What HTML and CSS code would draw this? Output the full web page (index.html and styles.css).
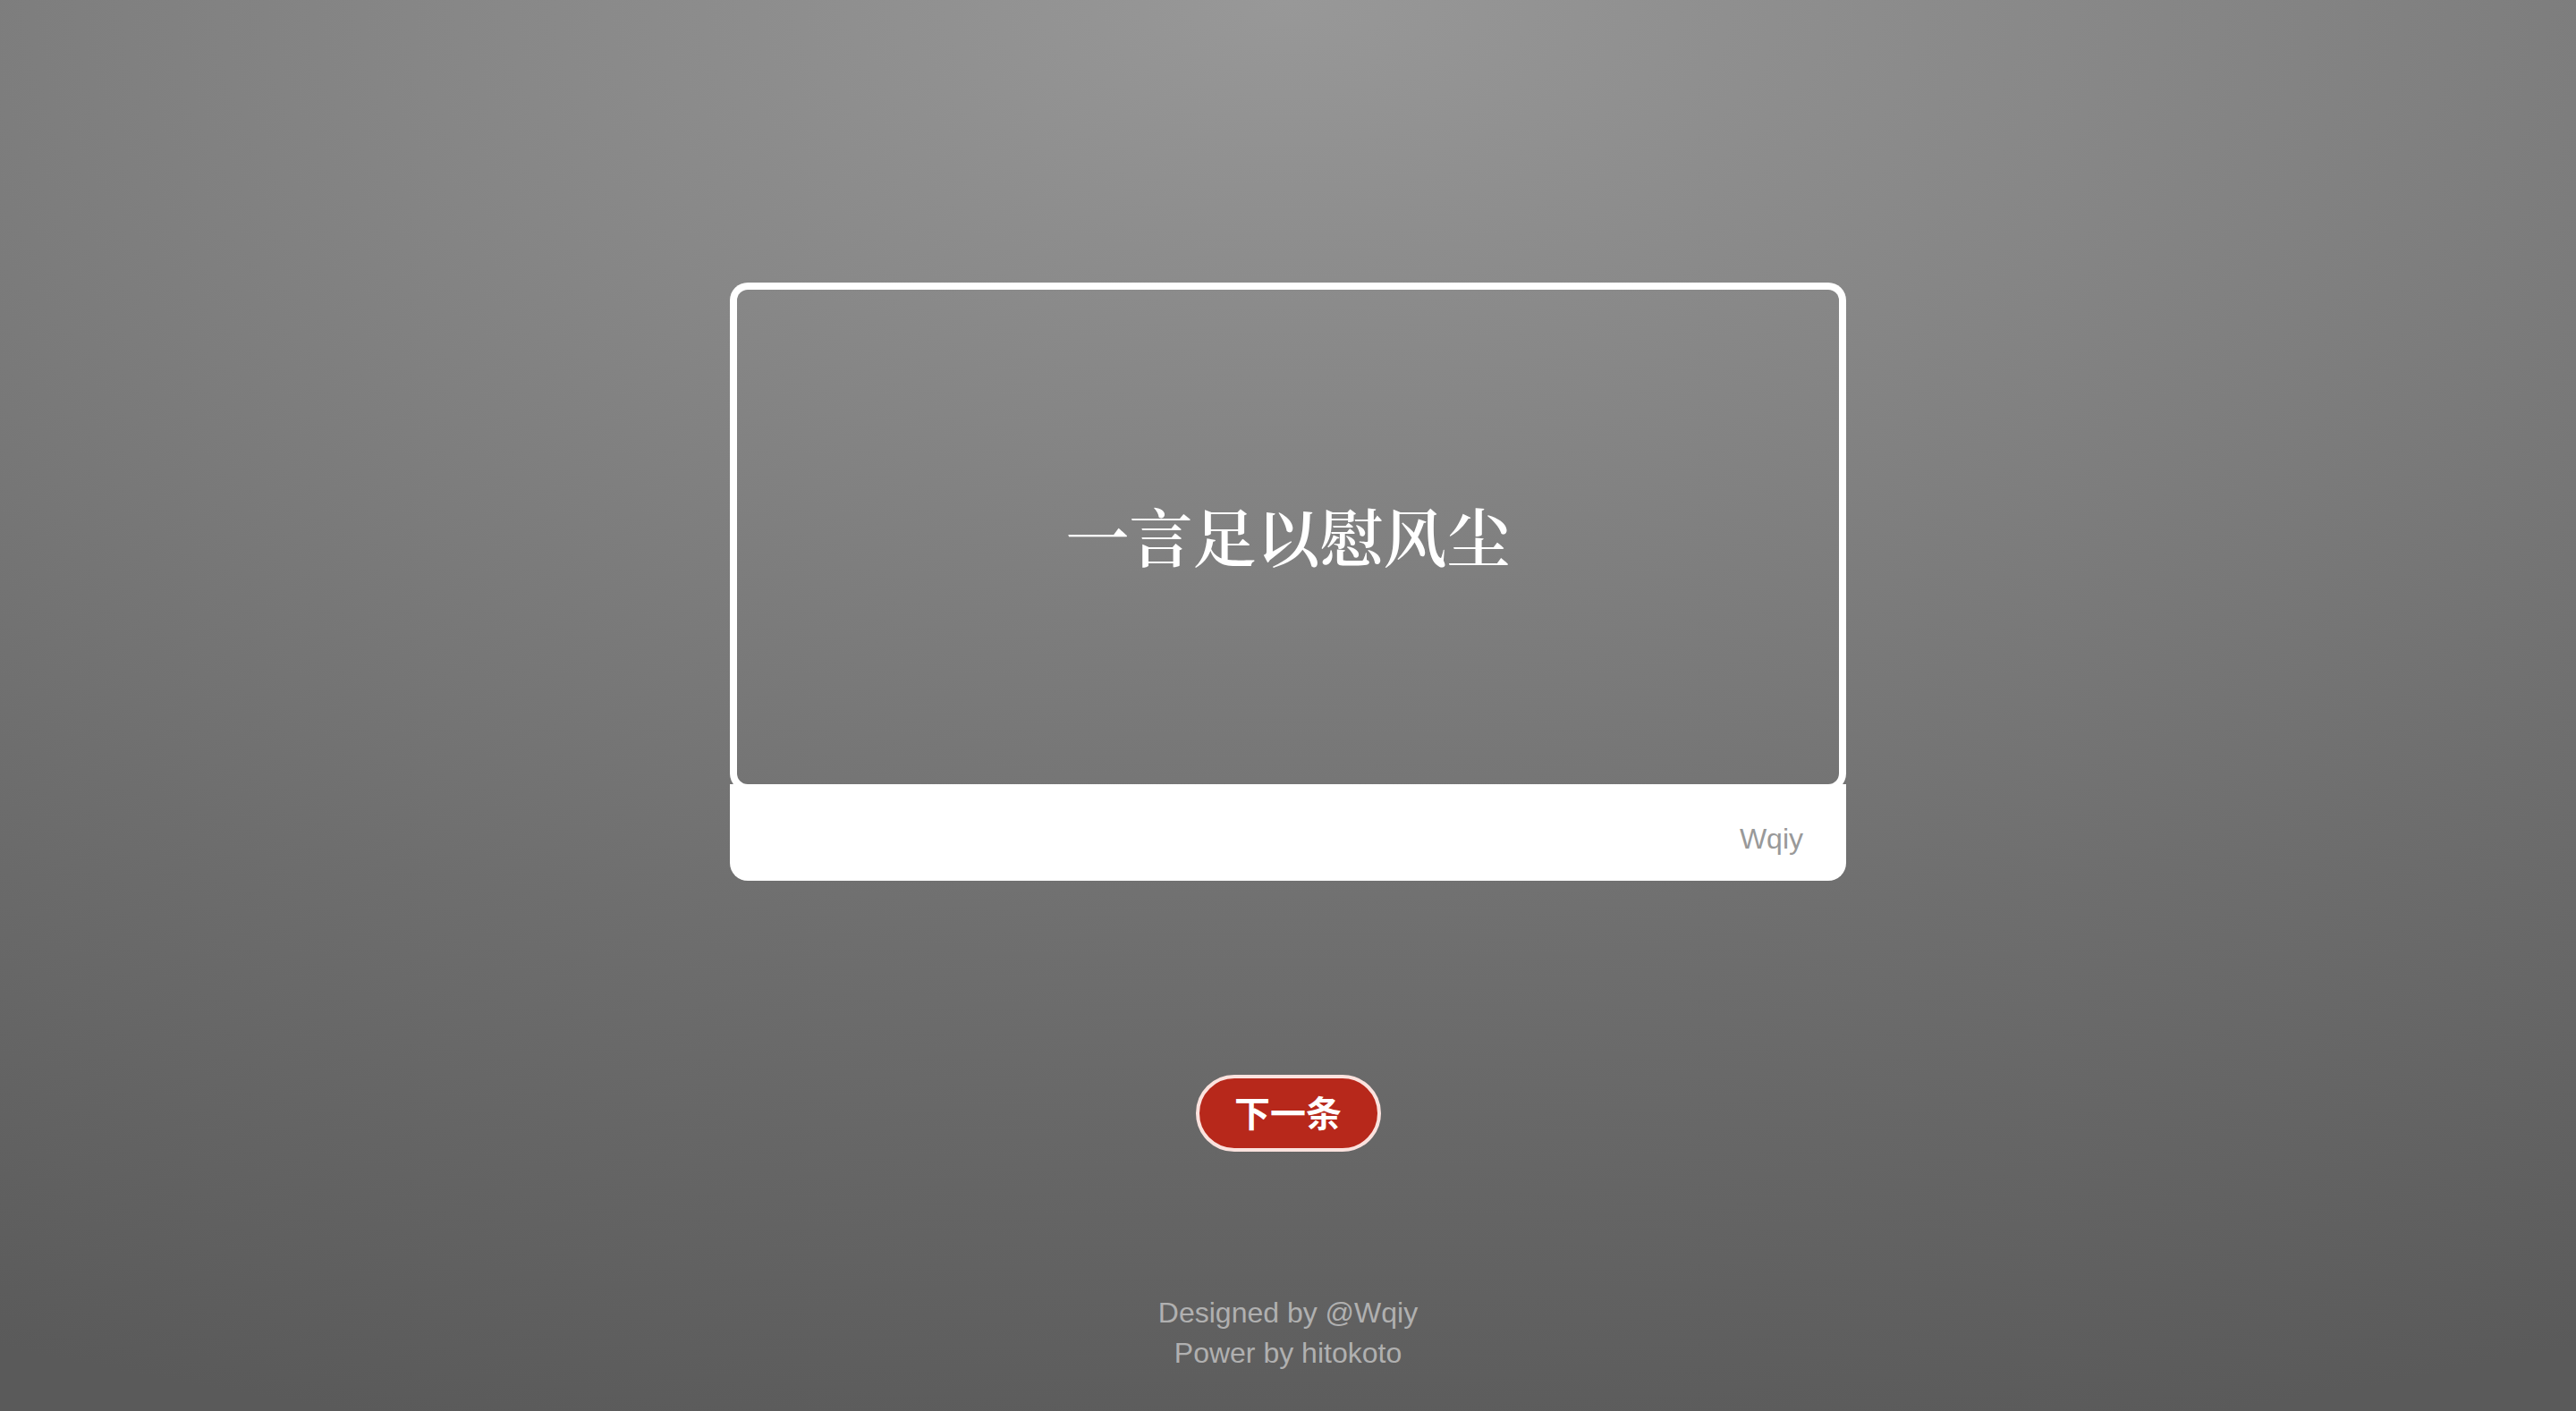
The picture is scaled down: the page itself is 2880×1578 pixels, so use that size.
FILE: index.html
```html
<!DOCTYPE html>
<html lang="zh-CN">
<head>
<meta charset="utf-8">
<title>一言</title>
<link rel="stylesheet" href="styles.css">
</head>
<body>
<main class="page">
  <section class="card">
    <div class="quote">
      <p class="quote-text">一言足以慰风尘</p>
    </div>
    <div class="author">Wqiy</div>
  </section>
  <button class="next-btn" type="button">下一条</button>
  <footer class="credits">
    <div>Designed by @Wqiy</div>
    <div>Power by hitokoto</div>
  </footer>
</main>
</body>
</html>
```

FILE: styles.css
```css
html, body {
  margin: 0;
  padding: 0;
  height: 100%;
}

body {
  background: radial-gradient(ellipse 120% 105% at 50% 0%, #989898 0%, #858585 30%, #6e6e6e 65%, #5a5a5a 100%);
  background-color: #707070;
  font-family: "Liberation Sans", "Noto Sans CJK SC", sans-serif;
  overflow: hidden;
}

.page {
  height: 1578px;
  display: flex;
  flex-direction: column;
  align-items: center;
  padding-top: 316px;
  box-sizing: border-box;
}

.card {
  width: 1248px;
  display: flex;
  flex-direction: column;
}

.quote {
  margin: 8px 8px 0;
  height: 553px;
  border-radius: 12px;
  box-shadow: 0 0 0 8px #ffffff;
  display: flex;
  align-items: center;
  justify-content: center;
  position: relative;
  z-index: 1;
}

.quote-text {
  margin: 0;
  padding-bottom: 8px;
  color: #ffffff;
  font-family: "Noto Serif CJK SC", "Source Han Serif SC", "Songti SC", "Noto Sans CJK SC", serif;
  font-size: 71px;
  font-weight: 600;
  letter-spacing: 0;
}

.author {
  background: #ffffff;
  height: 108px;
  border-radius: 0 0 20px 20px;
  display: flex;
  align-items: center;
  justify-content: flex-end;
  padding-right: 48px;
  padding-top: 14px;
  box-sizing: border-box;
  color: #999999;
  font-size: 32px;
}

.next-btn {
  margin-top: 217px;
  width: 207px;
  height: 86px;
  box-sizing: border-box;
  border: 4px solid #fbe2de;
  border-radius: 43px;
  background: #b7281b;
  color: #ffffff;
  font-family: "Noto Sans CJK SC", sans-serif;
  font-size: 40px;
  font-weight: 700;
  padding: 0 0 4px;
  display: flex;
  align-items: center;
  justify-content: center;
  cursor: pointer;
}

.credits {
  margin-top: 158px;
  color: #b0b0b0;
  font-size: 32px;
  line-height: 45px;
  text-align: center;
}
```
